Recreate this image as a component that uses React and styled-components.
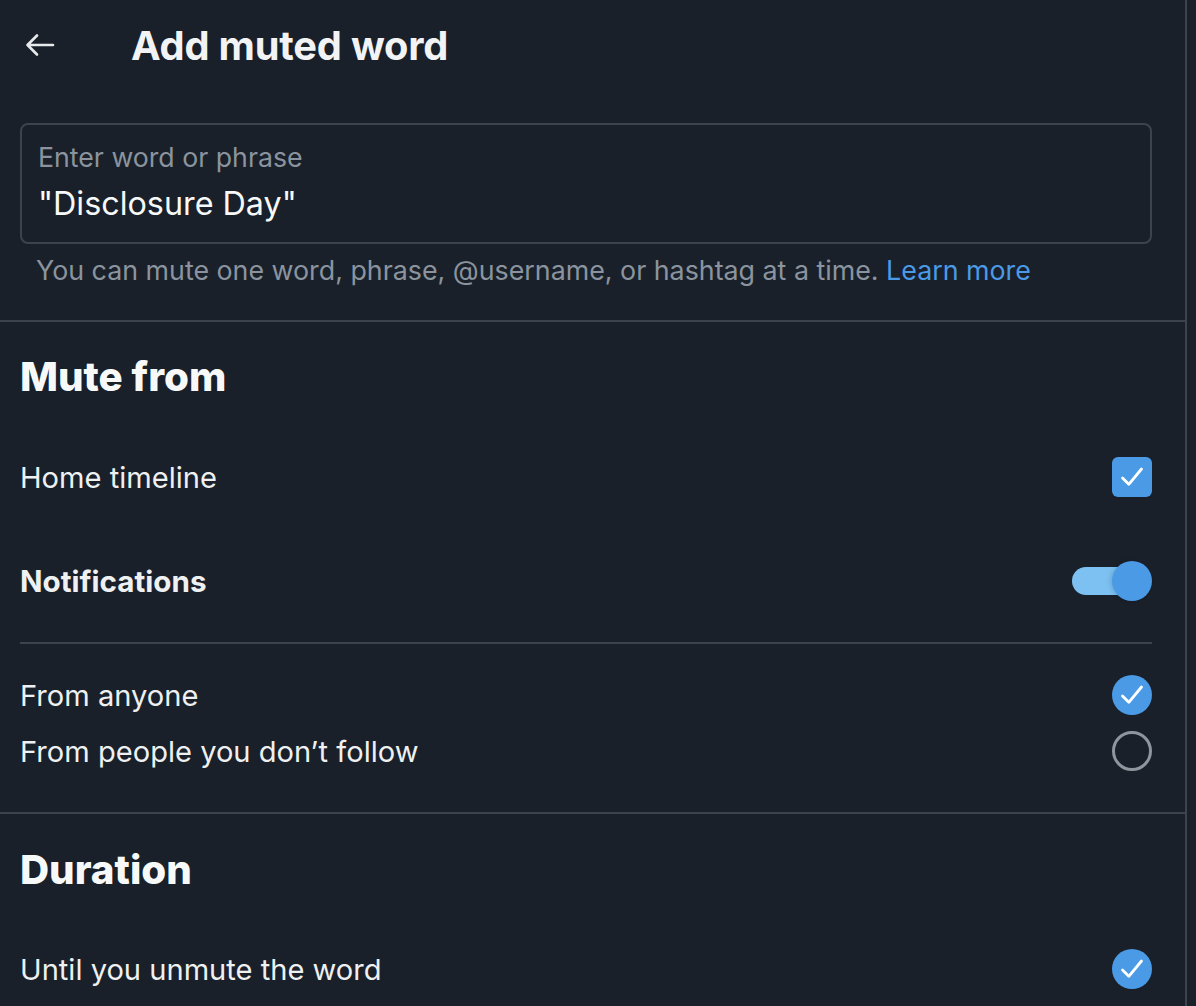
import React from 'react';
import styled, { createGlobalStyle } from 'styled-components';

const GlobalStyle = createGlobalStyle`
  html, body {
    margin: 0;
    padding: 0;
    background: #19202a;
  }
  body {
    font-family: Inter, "Noto Sans", "Liberation Sans", sans-serif;
    color: #e7e9ea;
    -webkit-font-smoothing: antialiased;
  }
`;

export default function App() {
  return (
    <>
      <GlobalStyle />
      <Page>
        <Column>
          <Header>
            <BackButton aria-label="Back">
              <svg width="30" height="24" viewBox="0 0 30 24" fill="none">
                <path d="M28 12H2.5M12 2.5L2.5 12L12 21.5" stroke="#e7e9ea" strokeWidth="2.6" strokeLinecap="round" strokeLinejoin="round" />
              </svg>
            </BackButton>
            <Title>Add muted word</Title>
          </Header>

          <InputSection>
            <InputBox>
              <Label>Enter word or phrase</Label>
              <Value>"Disclosure Day"</Value>
            </InputBox>
            <Helper>
              You can mute one word, phrase, @username, or hashtag at a time. <Link>Learn more</Link>
            </Helper>
          </InputSection>

          <Divider />

          <Section $bottom={39}>
            <Heading $top={31}>Mute from</Heading>
            <Row $top={46} $height={60}>
              <RowLabel>Home timeline</RowLabel>
              <Checkbox><Check /></Checkbox>
            </Row>
            <Row $top={44} $height={60}>
              <RowLabel $bold>Notifications</RowLabel>
              <Toggle>
                <Track />
                <Thumb />
              </Toggle>
            </Row>
            <InnerDivider />
            <Row $top={29} $height={44}>
              <RowLabel>From anyone</RowLabel>
              <Radio $checked><Check /></Radio>
            </Row>
            <Row $top={12} $height={44}>
              <RowLabel>From people you don’t follow</RowLabel>
              <Radio />
            </Row>
          </Section>

          <Divider />

          <Section $bottom={15}>
            <Heading $top={32}>Duration</Heading>
            <Row $top={53} $height={44}>
              <RowLabel>Until you unmute the word</RowLabel>
              <Radio $checked><Check /></Radio>
            </Row>
          </Section>
        </Column>
      </Page>
    </>
  );
}

function Check() {
  return (
    <svg width="40" height="40" viewBox="0 0 40 40" fill="none">
      <path d="M10.5 21L16.8 27.3L29.5 12" stroke="#ffffff" strokeWidth="2.8" strokeLinecap="round" strokeLinejoin="round" />
    </svg>
  );
}

const Page = styled.div`
  min-height: 100vh;
  display: flex;
`;

const Column = styled.div`
  width: 1185px;
  border-right: 2px solid #3c434d;
  display: flex;
  flex-direction: column;
`;

const Header = styled.div`
  height: 90px;
  display: flex;
  align-items: center;
  padding-left: 25px;
`;

const BackButton = styled.div`
  width: 30px;
  height: 24px;
  display: flex;
  align-items: center;
  margin-right: 76px;
`;

const Title = styled.h1`
  margin: 0;
  font-size: 39.8px;
  font-weight: 700;
  letter-spacing: -0.2px;
  color: #f1f3f4;
`;

const InputSection = styled.div`
  padding: 33px 33px 34px 20px;
`;

const InputBox = styled.div`
  border: 2px solid #3c434d;
  border-radius: 8px;
  padding: 16px 18px 18px 16px;
  display: flex;
  flex-direction: column;
`;

const Label = styled.div`
  font-size: 26.7px;
  line-height: 32px;
  color: #8b949e;
`;

const Value = styled.div`
  margin-top: 11px;
  font-size: 32.3px;
  line-height: 40px;
  color: #f7f9f9;
`;

const Helper = styled.div`
  margin-top: 10px;
  padding-left: 16px;
  font-size: 26.8px;
  line-height: 32px;
  white-space: nowrap;
  color: #8b949e;
`;

const Link = styled.span`
  color: #4a9ae6;
`;

const Divider = styled.div`
  height: 2px;
  background: #3c434d;
`;

const Section = styled.div`
  padding: 0 33px ${p => p.$bottom}px 20px;
  display: flex;
  flex-direction: column;
`;

const Heading = styled.h2`
  margin: ${p => p.$top}px 0 0;
  font-size: 40.3px;
  line-height: 48px;
  font-weight: 800;
  color: #f7f9f9;
`;

const Row = styled.div`
  margin-top: ${p => p.$top}px;
  height: ${p => p.$height}px;
  display: flex;
  align-items: center;
  justify-content: space-between;
`;

const RowLabel = styled.span`
  font-size: ${p => (p.$bold ? 29.6 : 29.1)}px;
  font-weight: ${p => (p.$bold ? 700 : 400)};
  color: #eef0f1;
`;

const Checkbox = styled.div`
  width: 40px;
  height: 40px;
  border-radius: 6px;
  background: #4a9ae6;
  display: flex;
  align-items: center;
  justify-content: center;
`;

const Radio = styled.div`
  width: 40px;
  height: 40px;
  box-sizing: border-box;
  border-radius: 50%;
  background: ${p => (p.$checked ? '#4a9ae6' : 'transparent')};
  border: ${p => (p.$checked ? 'none' : '3px solid #8e959d')};
  display: flex;
  align-items: center;
  justify-content: center;
`;

const Toggle = styled.div`
  position: relative;
  width: 80px;
  height: 40px;
  display: flex;
  align-items: center;
`;

const Track = styled.div`
  width: 78px;
  height: 28px;
  border-radius: 14px;
  background: #7cc1f2;
`;

const Thumb = styled.div`
  position: absolute;
  right: 0;
  top: 0;
  width: 40px;
  height: 40px;
  border-radius: 50%;
  background: #4a9ae6;
  box-shadow: -2px 0 4px rgba(0, 0, 0, 0.12);
`;

const InnerDivider = styled.div`
  margin-top: 31px;
  height: 2px;
  background: #3c434d;
`;
